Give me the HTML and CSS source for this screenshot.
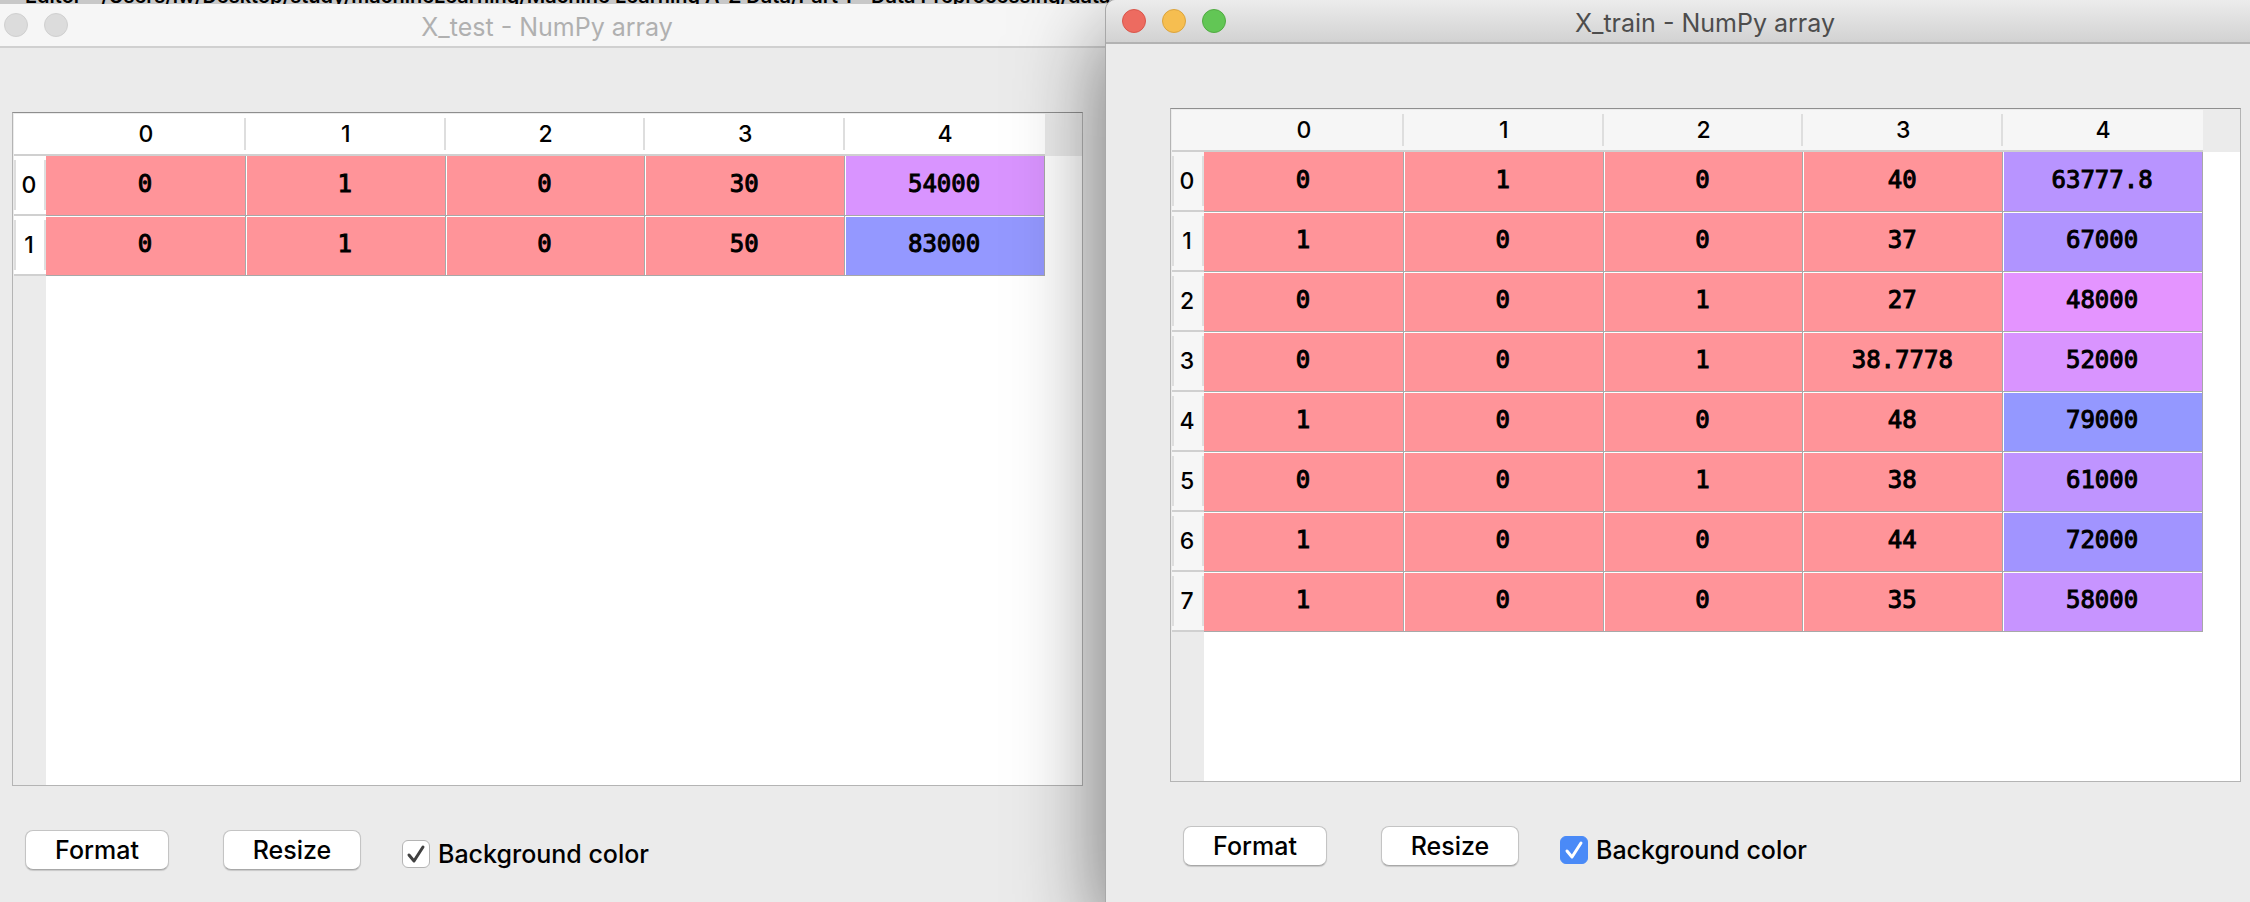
FILE: index.html
```html
<!DOCTYPE html>
<html lang="en">
<head>
<meta charset="utf-8">
<title>NumPy arrays</title>
<link rel="stylesheet" href="styles.css">
</head>
<body>
<main class="desktop">
  <div class="editor-title">Editor - /Users/lw/Desktop/study/machineLearning/Machine Learning A-Z Data/Part 1 - Data Preprocessing/data</div>

  <section class="window window-test">
    <header class="titlebar">
      <div class="lights"><span class="light"></span><span class="light"></span><span class="light"></span></div>
      <h1 class="title">X_test - NumPy array</h1>
    </header>
    <div class="frame">
      <table class="array">
        <thead><tr><th class="corner"></th><th>0</th><th>1</th><th>2</th><th>3</th><th>4</th></tr></thead>
        <tbody>
          <tr><th>0</th><td>0</td><td>1</td><td>0</td><td>30</td><td style="background-color:#d994ff">54000</td></tr>
          <tr><th>1</th><td>0</td><td>1</td><td>0</td><td>50</td><td style="background-color:#9498ff">83000</td></tr>
        </tbody>
      </table>
    </div>
    <footer class="toolbar">
      <button class="btn format" type="button">Format</button>
      <button class="btn resize" type="button">Resize</button>
      <label class="check"><span class="box"><input type="checkbox" checked><svg class="tick" viewBox="0 0 28 28"><path d="M7 15l5 6 9-14"/></svg></span>Background color</label>
    </footer>
  </section>

  <section class="window window-train">
    <header class="titlebar">
      <div class="lights"><span class="light red"></span><span class="light yellow"></span><span class="light green"></span></div>
      <h1 class="title">X_train - NumPy array</h1>
    </header>
    <div class="frame">
      <table class="array">
        <thead><tr><th class="corner"></th><th>0</th><th>1</th><th>2</th><th>3</th><th>4</th></tr></thead>
        <tbody>
          <tr><th>0</th><td>0</td><td>1</td><td>0</td><td>40</td><td style="background-color:#b894ff">63777.8</td></tr>
          <tr><th>1</th><td>1</td><td>0</td><td>0</td><td>37</td><td style="background-color:#b094ff">67000</td></tr>
          <tr><th>2</th><td>0</td><td>0</td><td>1</td><td>27</td><td style="background-color:#e494ff">48000</td></tr>
          <tr><th>3</th><td>0</td><td>0</td><td>1</td><td>38.7778</td><td style="background-color:#d994ff">52000</td></tr>
          <tr><th>4</th><td>1</td><td>0</td><td>0</td><td>48</td><td style="background-color:#9498ff">79000</td></tr>
          <tr><th>5</th><td>0</td><td>0</td><td>1</td><td>38</td><td style="background-color:#bf94ff">61000</td></tr>
          <tr><th>6</th><td>1</td><td>0</td><td>0</td><td>44</td><td style="background-color:#a194ff">72000</td></tr>
          <tr><th>7</th><td>1</td><td>0</td><td>0</td><td>35</td><td style="background-color:#c794ff">58000</td></tr>
        </tbody>
      </table>
    </div>
    <footer class="toolbar">
      <button class="btn format" type="button">Format</button>
      <button class="btn resize" type="button">Resize</button>
      <label class="check"><span class="box"><input type="checkbox" checked><svg class="tick" viewBox="0 0 28 28"><path d="M7 15l5 6 9-14"/></svg></span>Background color</label>
    </footer>
  </section>
</main>
</body>
</html>
```
FILE: styles.css
```css
* { box-sizing: border-box; }

body {
  margin: 0;
  font-family: Inter, "Liberation Sans", sans-serif;
  font-size: 25px;
  color: #000;
}

.desktop {
  position: relative;
  height: 100vh;
  overflow: hidden;
  background: #c8c8c8;
}

.editor-title {
  padding-left: 25px;
  margin-top: -16px;
  font-size: 20px;
  line-height: 24px;
  font-weight: 600;
  white-space: nowrap;
}

.window {
  position: absolute;
  display: flex;
  flex-direction: column;
  background: #ebebeb;
  border-radius: 10px 10px 0 0;
}

.window-test {
  top: 4px;
  bottom: -4px;
  left: -52px;
  right: calc(50% - 21px);
}

.window-train {
  top: 0;
  bottom: 0;
  left: calc(50% - 19px);
  right: -54px;
  box-shadow: 0 0 0 1px #a8a8a8, 0 34px 90px rgba(0, 0, 0, 0.55);
}

.titlebar {
  display: grid;
  grid-template-columns: 1fr auto 1fr;
  align-items: center;
  height: 44px;
  padding: 0 16px;
  border-bottom: 2px solid #d0d0d0;
  border-radius: 10px 10px 0 0;
  background: #f6f6f6;
}

.window-train .titlebar {
  border-bottom-color: #b2b2b2;
  background: linear-gradient(#ececec, #d2d2d2);
}

.lights {
  display: flex;
  gap: 16px;
}

.light {
  width: 24px;
  height: 24px;
  border: 1px solid #d0d0d0;
  border-radius: 50%;
  background: #dcdcdc;
}

.red { background: #ed6b60; border-color: #d9564b; }
.yellow { background: #f6be50; border-color: #dba43d; }
.green { background: #62c655; border-color: #51ab42; }

.title {
  margin: 0;
  padding-top: 4px;
  font-size: 25px;
  line-height: 32px;
  font-weight: 400;
  color: #b0b0b0;
}

.window-train .title { color: #4d4d4d; }

.frame {
  flex: 1;
  margin: 64px 63px 0 64px;
  padding: 1px 37px 0 1px;
  border: 1px solid #b4b4b4;
  border-top-color: #8e8e8e;
  background:
    linear-gradient(#ebebeb, #ebebeb) 0 0 / 100% 43px no-repeat,
    linear-gradient(#ebebeb, #ebebeb) 0 0 / 33px 100% no-repeat,
    #fff;
}

.array {
  width: 100%;
  table-layout: fixed;
  border-collapse: separate;
  border-spacing: 0;
}

.array th {
  padding: 0;
  font-size: 23px;
  line-height: 28px;
  font-weight: 500;
  background: #fff no-repeat;
}

.window-train .array th { background-color: #f6f6f6; }

.array thead th {
  height: 42px;
  border-bottom: 2px solid #d0d0d0;
  background-image: linear-gradient(#dedede, #dedede);
  background-size: 2px 32px;
  background-position: right 4px;
}

.array thead th.corner,
.array thead th:last-child { background-image: none; }

.array thead th.corner { width: 32px; }

.array tbody th {
  height: 60px;
  padding-right: 2px;
  border-bottom: 2px solid #d0d0d0;
  background-image: linear-gradient(#dedede, #dedede), linear-gradient(#dedede, #dedede);
  background-size: 2px 50px;
  background-position: left 4px, right 4px;
}

.array td {
  height: 60px;
  padding: 0 1px 3px 0;
  text-align: center;
  font-family: "DejaVu Sans Mono", monospace;
  font-size: 24px;
  line-height: 28px;
  -webkit-text-stroke: 1px #000;
  background-color: #ff9499;
  border: 0 solid #a8a8a8;
  border-width: 0 1px 1px 0;
  box-shadow: inset 1px 1px 0 #fff;
}

.array td:nth-child(2) { box-shadow: inset 0 1px 0 #fff; }
.array tbody tr:first-child td { box-shadow: inset 1px 0 0 #fff; }
.array tbody tr:first-child td:nth-child(2) { box-shadow: none; }

.toolbar {
  display: flex;
  align-items: flex-start;
  height: 120px;
  padding: 44px 77px 0;
}

.btn {
  height: 40px;
  padding: 0;
  border: 1px solid #c4c4c4;
  border-bottom-color: #a8a8a8;
  border-radius: 8px;
  background: #fff;
  box-shadow: 0 1px 1px rgba(0, 0, 0, 0.15);
  font: inherit;
  font-weight: 500;
  color: #000;
}

.format { width: 144px; margin-right: 54px; }
.resize { width: 138px; margin-right: 41px; }

.check {
  display: flex;
  align-items: center;
  gap: 8px;
  height: 48px;
  font-weight: 500;
}

.box {
  display: grid;
  width: 28px;
  height: 28px;
}

.box input,
.tick { grid-area: 1 / 1; }

.box input {
  appearance: none;
  width: 28px;
  height: 28px;
  margin: 0;
  border: 1px solid #b4b4b4;
  border-radius: 6px;
  background: #fff;
}

.window-train .box input { background: #4a8af7; border-color: #4a8af7; }

.tick {
  width: 28px;
  height: 28px;
  fill: none;
  stroke: #404040;
  stroke-width: 3;
  stroke-linecap: round;
  stroke-linejoin: round;
  pointer-events: none;
}

.window-train .tick { stroke: #fff; }
```
